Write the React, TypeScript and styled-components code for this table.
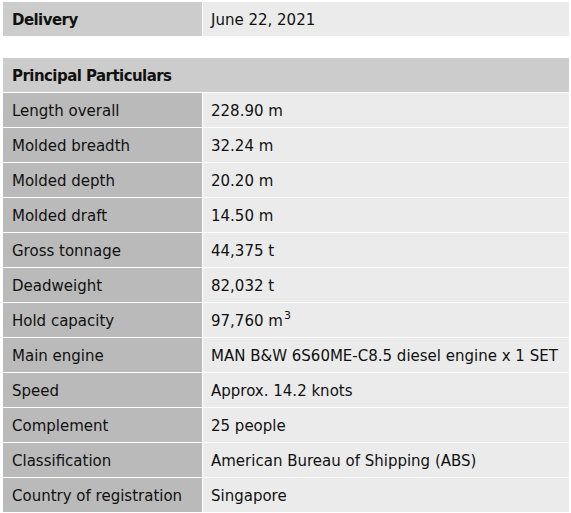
import React from "react";
import styled, { createGlobalStyle } from "styled-components";

const Global = createGlobalStyle`
  html, body { margin: 0; padding: 0; background: #ffffff; }
  body { font-family: "DejaVu Sans", Verdana, sans-serif; color: #111; }
`;

const Page = styled.div`
  padding: 2px 2px 0 3px;
  display: flex;
  flex-direction: column;
  gap: 22px;
`;

const Table = styled.div`
  display: grid;
  grid-template-columns: 199px 1fr;
  column-gap: 1px;
  row-gap: 1px;
`;

const Cell = styled.div<{ $kind: "label" | "value" | "head" | "key" }>`
  box-sizing: border-box;
  height: 34px;
  display: flex;
  align-items: center;
  padding: 2px 8px 0 9px;
  font-size: 15px;
  white-space: nowrap;
  background: ${(p) =>
    p.$kind === "value" ? "#ebebeb" : p.$kind === "label" ? "#bababa" : "#cccccc"};
  font-weight: ${(p) => (p.$kind === "head" || p.$kind === "key" ? 700 : 400)};
  letter-spacing: ${(p) => (p.$kind === "head" || p.$kind === "key" ? "-0.55px" : "0")};
  grid-column: ${(p) => (p.$kind === "head" ? "1 / span 2" : "auto")};
  ${(p) => (p.$kind === "value" ? "padding-left: 8px;" : "")}
`;

const Sup = styled.span`
  font-size: 11px;
  position: relative;
  top: -6px;
  margin-left: 1px;
`;

const rows: [string, React.ReactNode][] = [
  ["Length overall", "228.90 m"],
  ["Molded breadth", "32.24 m"],
  ["Molded depth", "20.20 m"],
  ["Molded draft", "14.50 m"],
  ["Gross tonnage", "44,375 t"],
  ["Deadweight", "82,032 t"],
  ["Hold capacity", <>97,760 m<Sup>3</Sup></>],
  ["Main engine", "MAN B&W 6S60ME-C8.5 diesel engine x 1 SET"],
  ["Speed", "Approx. 14.2 knots"],
  ["Complement", "25 people"],
  ["Classification", "American Bureau of Shipping (ABS)"],
  ["Country of registration", "Singapore"],
];

export default function App() {
  return (
    <>
      <Global />
      <Page>
        <Table>
          <Cell $kind="key">Delivery</Cell>
          <Cell $kind="value">June 22, 2021</Cell>
        </Table>
        <Table>
          <Cell $kind="head">Principal Particulars</Cell>
          {rows.map(([k, v]) => (
            <React.Fragment key={k}>
              <Cell $kind="label">{k}</Cell>
              <Cell $kind="value">{v}</Cell>
            </React.Fragment>
          ))}
        </Table>
      </Page>
    </>
  );
}
